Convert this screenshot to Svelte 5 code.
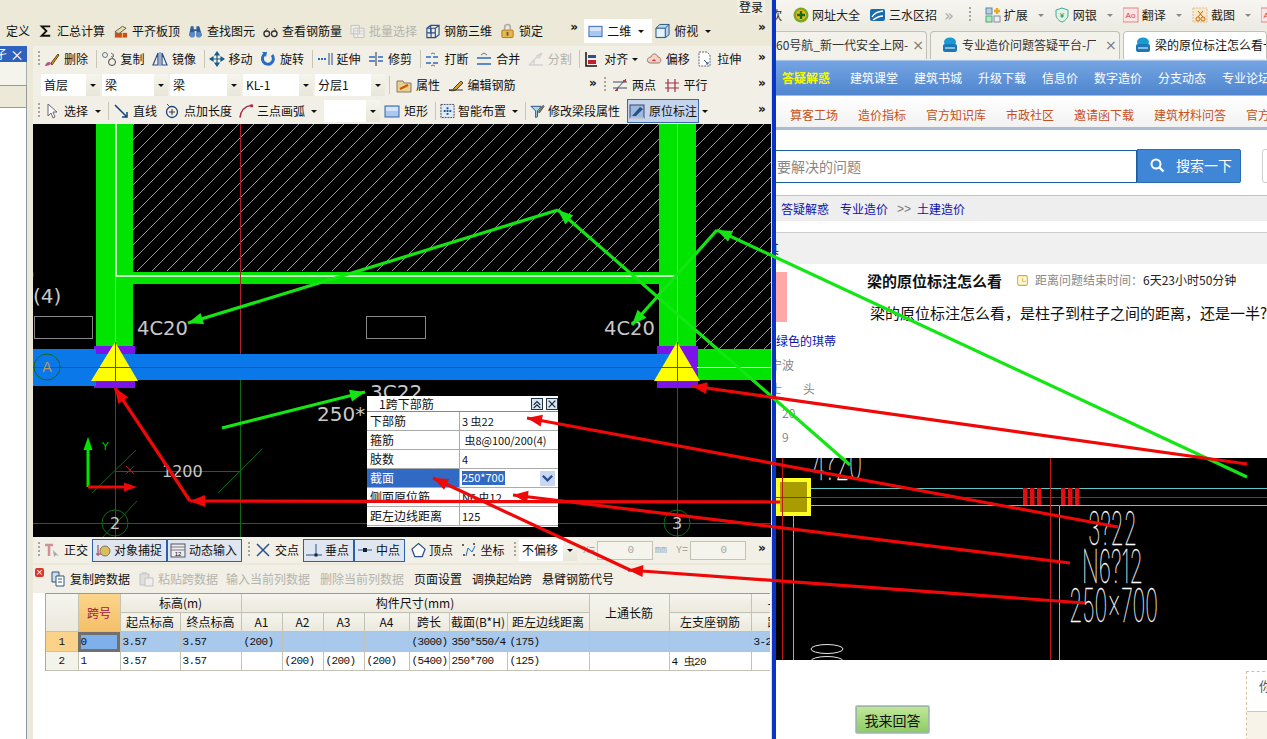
<script>
  const ic = {
    sigma: '<path d="M13 3H4l5 5-5 5h9" fill="none" stroke="#111" stroke-width="2"/>',
    align: '<path d="M2 9l8-6 4 2-8 6z" fill="#e8dfa0" stroke="#556"/><rect x="2" y="10" width="13" height="5" fill="#c8501a"/><path d="M10 10v5" stroke="#fc6"/>',
    binoc: '<path d="M3 3h3v3h3V3h3l3 10H9V8H7v5H1z" fill="#2d5c96"/><circle cx="4.5" cy="12" r="3" fill="#5b8ac4"/><circle cx="11.5" cy="12" r="3" fill="#5b8ac4"/>',
    glass: '<path d="M1 10l4-5M15 10l-3-5" stroke="#555" fill="none"/><circle cx="4" cy="11" r="3" fill="none" stroke="#333" stroke-width="1.4"/><circle cx="12" cy="11" r="3" fill="none" stroke="#333" stroke-width="1.4"/>',
    batch: '<path d="M1 2h9v9H1zM4 5h11v10H4z" fill="#eee" stroke="#bbb"/><path d="M4 8h11M4 11h11M8 5v10" stroke="#ccc"/>',
    grid3: '<path d="M2 5l4-3h9v10l-4 3H2zM2 5h9v10M11 5l4-3M6 2v9M2 10h9M6.500 5v10" fill="none" stroke="#2a4c90" stroke-width="1.2"/>',
    lock: '<rect x="2" y="7" width="12" height="8" rx="1" fill="#e8b84a" stroke="#a87a20"/><path d="M5 7V4a3 3 0 016 0v3" fill="none" stroke="#aaa" stroke-width="1.6"/><rect x="7" y="9" width="2" height="4" fill="#754"/>',
    rect: '<rect x="1" y="3" width="14" height="11" fill="#a9c8f0" stroke="#3a66b0"/><rect x="2" y="4" width="12" height="4" fill="#d5e4f8"/>',
    cube: '<path d="M1 5l4-4h10v11l-4 3H1z" fill="#b8d4ee" stroke="#26527e"/><path d="M1 5h10v10M11 5l4-4" fill="none" stroke="#26527e"/><path d="M2 6h8v8H2z" fill="#e8f2fa"/>',
    del: '<path d="M7 12l7-9 1 1-7 10z" fill="#d8a030" stroke="#640"/><path d="M1 15c1-4 4-5 6-3 0 2-3 3-6 3z" fill="#c05090"/>',
    copy: '<circle cx="4" cy="4" r="2.500" fill="none" stroke="#678"/><circle cx="11" cy="11" r="3.500" fill="none" stroke="#444"/><path d="M10 2l3 2-3 2M7 11l6-6" fill="none" stroke="#777"/>',
    mirror: '<path d="M1 14L6 2v12zM15 14L10 2v12z" fill="none" stroke="#2a4c90" stroke-width="1.2"/><path d="M8 1v14" stroke="#2a4c90" stroke-width=".8"/>',
    move: '<path d="M8 1v14M1 8h14M8 1L6 4h4zM8 15l-2-3h4zM1 8l3-2v4zM15 8l-3-2v4z" stroke="#1a5c8a" fill="#1a5c8a" stroke-width="1.2"/>',
    rot: '<path d="M12 4a5.500 5.500 0 11-7-1" fill="none" stroke="#2a6cc0" stroke-width="3"/><path d="M2 1l5 0-1 5z" fill="#2a6cc0"/>',
    extend: '<path d="M1 8h9" stroke="#2a6cc0" stroke-dasharray="2 1" stroke-width="2"/><path d="M12 2v12M15 2v12" stroke="#2a4c90"/>',
    trim: '<path d="M8 1v14" stroke="#333"/><path d="M1 6h6M1 10h6M10 6h5M10 10h5" stroke="#2a6cc0" stroke-width="1.300"/>',
    brk: '<path d="M1 6h14M1 12h14" stroke="#2a6cc0" stroke-dasharray="5 2" stroke-width="1.500"/><path d="M6 3l2-1 2 1M6 15l2-1 2 1" stroke="#678" fill="none"/>',
    merge: '<path d="M1 7h14M1 13h14" stroke="#2a6cc0" stroke-width="1.500"/><path d="M5 4l3-2 3 2" stroke="#678" fill="none"/>',
    split: '<path d="M1 14h14M1 14L12 3M6 14V9M14 2l-3 5-2-2z" stroke="#ccc" fill="none" stroke-width="1.300"/>',
    ali: '<path d="M2 1v14h11" stroke="#111" stroke-width="1.500" fill="none"/><rect x="4" y="4" width="8" height="3" fill="#2a5090"/><rect x="4" y="9" width="8" height="4" fill="#c02030"/>',
    off: '<path d="M2 11c-2-4 2-5 3-5 1-4 6-4 7 0 3 0 4 5 1 6H4z" fill="#f6d0c0" stroke="#977"/><path d="M6 10c1-2 3-2 4 0z" fill="#c33"/>',
    stretch: '<path d="M2 1h8l3 3v11H2z" fill="#fff" stroke="#667" stroke-dasharray="2 1"/><path d="M7 9l4 4M9 13h2v-2" stroke="#2a5090" fill="none"/>',
    prop: '<path d="M1 4h6l1 2h7v9H1z" fill="#e8d090" stroke="#876"/><path d="M4 12l8-4" stroke="#c50" stroke-width="2"/>',
    edit: '<path d="M1 13c3 1 4 0 5-2l7-7 2 2-7 7c-2 1-5 1-7 0z" fill="#d8a030" stroke="#443"/><path d="M1 13h14" stroke="#333"/>',
    two: '<path d="M3 14L14 2M1 5h14M1 11h14" stroke="#446" fill="none"/><path d="M4 13h2M11 4h3" stroke="#c33" stroke-width="2"/>',
    par: '<path d="M4 2v13M11 2v13M1 6h14M1 11h14" stroke="#a03048" stroke-width="1.200"/>',
    sel: '<path d="M4 1v12l3-3 2 5 2-1-2-5h4z" fill="#fff" stroke="#667"/>',
    line: '<path d="M2 2l12 12M14 9v5H9" stroke="#15447c" stroke-width="1.500" fill="none"/>',
    ptl: '<circle cx="8" cy="9" r="5.500" fill="none" stroke="#15447c" stroke-width="1.300"/><path d="M8 6v6M5 9h6" stroke="#333"/><path d="M3 1l3 3-3 2" fill="none" stroke="#a03048"/>',
    arc: '<path d="M1 15C2 8 6 3 13 2" fill="none" stroke="#a03048" stroke-width="1.600"/><rect x="12" y="1" width="3" height="3" fill="#a03048"/>',
    smart: '<rect x="1" y="1" width="14" height="14" fill="#dcebf6" stroke="#445" stroke-dasharray="2 1"/><path d="M8 4v8M4 8h8" stroke="#2a5090" stroke-width="2" stroke-dasharray="2 1"/>',
    mod: '<path d="M1 3h11L8 8v6l-2 1V8z" fill="#a8d8e8" stroke="#26527e"/><path d="M9 9l5-7 1 1-5 7z" fill="#9a8" stroke="#443"/>',
    orig: '<rect x="1" y="2" width="14" height="13" fill="#9cb8e0" stroke="#446"/><path d="M3 13l8-9 3 2-7 7z" fill="#26527e"/><path d="M1 15h14" stroke="#fff"/>',
    ortho: '<path d="M1 3h8M5 3v11" stroke="#d09098" stroke-width="2.500"/><path d="M9 8l1 7 2-2 3 1z" fill="#aaa"/>',
    osnap: '<path d="M3 3v11M1 12h6" stroke="#a03048"/><circle cx="10" cy="9" r="5" fill="#d8c060" stroke="#875"/>',
    dyn: '<rect x="1" y="2" width="14" height="13" fill="#eee" stroke="#556"/><path d="M1 5h14M1 8h14" stroke="#778"/><text x="8" y="14" font-size="6" text-anchor="middle" font-family="Liberation Sans">12</text>',
    cross: '<path d="M2 2l12 12M14 2L2 14" stroke="#2a5090" stroke-width="1.500"/>',
    perp: '<path d="M0 13h16M10 2v11" stroke="#2a5090"/><rect x="8.500" y="11.500" width="3" height="3" fill="#123"/>',
    mid: '<path d="M1 8h14" stroke="#2a5090"/><rect x="6" y="6" width="4" height="4" fill="#123"/>',
    vert: '<path d="M8 1l7 6-3 8H4L1 7z" fill="#fff" stroke="#2a5090" stroke-width="1.300"/>',
    coord: '<path d="M5 14l2-8 4 4 3-6" fill="none" stroke="#2a6cc0"/><circle cx="2" cy="3" r="1" fill="#333"/><circle cx="13" cy="2" r="1" fill="#333"/><circle cx="3" cy="13" r="1" fill="#333"/><circle cx="13" cy="13" r="1" fill="#333"/>',
    cp: '<path d="M2 1h7v10H2z" fill="#cde" stroke="#357"/><path d="M6 5h8v10H6z" fill="#fff" stroke="#357"/><path d="M8 8h4M8 11h4" stroke="#357"/>',
    paste: '<path d="M2 3h9v11H2z" fill="#ddd" stroke="#bbb"/><path d="M7 7h8v8H7z" fill="#eee" stroke="#bbb"/><rect x="4" y="1" width="5" height="3" fill="#ccc"/>',
    nav: '<circle cx="8" cy="8" r="7.500" fill="#7aa820"/><circle cx="8" cy="8" r="5" fill="#f4b820"/><path d="M8 4v8M4 8h8" stroke="#1a6a10" stroke-width="2.400"/>',
    water: '<rect x="0" y="2" width="15" height="12" rx="2" fill="#1a6ab0"/><path d="M2 10c3-5 6-5 11-6M3 13c4-3 7-4 10-4" stroke="#fff" stroke-width="1.400" fill="none"/>',
    ext: '<rect x="1" y="1" width="6" height="6" fill="#bcd" stroke="#58a"/><rect x="1" y="9" width="6" height="6" fill="#bde4b8" stroke="#4a8"/><rect x="9" y="9" width="6" height="6" fill="#eee" stroke="#88a"/><path d="M12 1v6M9 4h6" stroke="#e8a820" stroke-width="2.500"/>',
    bank: '<path d="M8 1l6 2v5c0 3-3 6-6 7-3-1-6-4-6-7V3z" fill="#dff4e8" stroke="#4a9"/><text x="8" y="11" font-size="8" text-anchor="middle" fill="#2a8a50" font-family="Liberation Sans">¥</text>',
    trans: '<rect x="0" y="1" width="15" height="14" fill="#fde4e4" stroke="#d88"/><text x="7.500" y="11" font-size="8" text-anchor="middle" fill="#c44" font-family="Liberation Sans">Ao</text>',
    shot: '<rect x="1" y="1" width="14" height="14" fill="#fbe8c8" stroke="#db8" stroke-dasharray="2 1"/><circle cx="6" cy="12" r="2" fill="none" stroke="#c60"/><circle cx="11" cy="12" r="2" fill="none" stroke="#c60"/><path d="M6 10l5-6M11 10L6 4" stroke="#c60"/>',
    ie: '<ellipse cx="8" cy="5" rx="6" ry="4.500" fill="#1a9ad0"/><rect x="1" y="7" width="14" height="8" rx="2" fill="#1878b8"/><path d="M3 11h10" stroke="#fff"/>',
    search: '<circle cx="7" cy="7" r="4.500" fill="none" stroke="#fff" stroke-width="2"/><path d="M10 10l4.500 4.500" stroke="#fff" stroke-width="2.400"/>',
    clock: '<rect x="2" y="2" width="12" height="12" rx="2" fill="#fff8dc" stroke="#e0a830" stroke-width="1.300"/><path d="M8 5v4h4" fill="none" stroke="#e0a830"/>',
    upup: '<path d="M2 7l4-4 4 4M2 11l4-4 4 4" fill="none" stroke="#123" stroke-width="1.400"/>',
    xx: '<path d="M2 2l8 8M10 2l-8 8" fill="none" stroke="#123" stroke-width="1.400"/>',
    down: '<path d="M3 5l5 5 5-5" fill="none" stroke="#2a4c90" stroke-width="2.400"/>'
  };

  const row1 = [
    { i: 'sigma', t: '汇总计算' }, { i: 'align', t: '平齐板顶' }, { i: 'binoc', t: '查找图元' },
    { i: 'glass', t: '查看钢筋量' }, { i: 'batch', t: '批量选择', off: true }, { i: 'grid3', t: '钢筋三维' }, { i: 'lock', t: '锁定' }
  ];
  const row2 = [
    { i: 'del', t: '删除' }, 's', { i: 'copy', t: '复制' }, { i: 'mirror', t: '镜像' }, 's', { i: 'move', t: '移动' }, { i: 'rot', t: '旋转' }, 's',
    { i: 'extend', t: '延伸' }, { i: 'trim', t: '修剪' }, 's', { i: 'brk', t: '打断' }, { i: 'merge', t: '合并' }, { i: 'split', t: '分割', off: true }, 's',
    { i: 'ali', t: '对齐', dd: true }, { i: 'off', t: '偏移' }, { i: 'stretch', t: '拉伸' }
  ];
  const row4a = [
    { i: 'sel', t: '选择', dd: true }, 's', { i: 'line', t: '直线' }, { i: 'ptl', t: '点加长度' }, { i: 'arc', t: '三点画弧', dd: true, n: true }
  ];
  const row4b = [
    { i: 'rect', t: '矩形' }, 's', { i: 'smart', t: '智能布置', dd: true, n: true }, 's', { i: 'mod', t: '修改梁段属性', n: true }
  ];
  const grid1 = [{ i: 'cp', t: '复制跨数据' }, { i: 'paste', t: '粘贴跨数据', off: true }];
  const combos = [['首层', 59], ['梁', 66], ['梁', 71], ['KL-1', 70], ['分层1', 70]];

  const arrows = [
    [1247, 477, 717, 230, 'g'], [717, 230, 632, 325, 'g'], [850, 465, 558, 210, 'g'], [558, 210, 188, 323, 'g'], [222, 428, 365, 392, 'g'],
    [1247, 464, 692, 386, 'r'], [1118, 527, 527, 418, 'r'], [1070, 563, 513, 495, 'r'], [1085, 603, 628, 570, 'r'],
    [780, 502, 190, 501, 'r'], [190, 501, 115, 388, 'r'], [630, 570, 433, 478, 'r']
  ].map(([x1, y1, x2, y2, c]) => {
    const d = Math.hypot(x2 - x1, y2 - y1), ux = (x2 - x1) / d, uy = (y2 - y1) / d;
    const bx = x2 - ux * 15, by = y2 - uy * 15;
    return { x1, y1, x2, y2, c: c === 'g' ? '#14e614' : '#ee0808',
      head: `${x2},${y2} ${bx - uy * 6},${by + ux * 6} ${bx + uy * 6},${by - ux * 6}` };
  });

  const dlg = [['下部筋', '3 虫22'], ['箍筋', ' 虫8@100/200(4)'], ['肢数', '4'], ['截面', '250*700', true], ['侧面原位筋', 'N6 虫12'], ['距左边线距离', '125']];
  const cols = [32, 42, 60, 61, 41, 41, 41, 45, 40, 58, 82, 80, 82, 20];
  const nav = ['建筑课堂', '建筑书城', '升级下载', '信息价', '数字造价', '分支动态', '专业论坛'];
  const sub = ['算客工场', '造价指标', '官方知识库', '市政社区', '邀请函下载', '建筑材料问答', '官方'];
  const bars = [1023, 1030, 1037, 1061, 1068, 1075];
</script>

{#snippet icon(name, cls = '')}
  <svg class="ic {cls}" viewBox="0 0 16 16" aria-hidden="true">{@html ic[name]}</svg>
{/snippet}
{#snippet dd()}<span class="dd"></span>{/snippet}
{#snippet tools(list)}
  {#each list as it}
    {#if it === 's'}
      <span class="sep"></span>
    {:else}
      <span class="tool" class:off={it.off} class:narrow={it.n}>
        {@render icon(it.i)}<span>{it.t}</span>{#if it.dd}{@render dd()}{/if}
      </span>
    {/if}
  {/each}
{/snippet}

<div class="screen">
  <section class="app">
    <div class="title"><span>登录</span></div>
    <div class="bar row1">
      <span class="def">定义</span>
      {@render tools(row1)}
      <span class="chev c1">»</span>
      <div class="view">
        <span class="tool white">{@render icon('rect')}<span>二维</span>{@render dd()}</span>
        <span class="tool">{@render icon('cube')}<span>俯视</span>{@render dd()}</span>
      </div>
      <span class="chev">»</span>
    </div>

    <div class="body">
      <aside class="panel">
        <div class="ptitle"><span>孑</span><b>×</b></div>
        <div class="pa"></div>
        <div class="pb"></div>
      </aside>

      <div class="work">
        <div class="bar">
          <i class="grip"></i>
          {@render tools(row2)}
          <span class="chev">»</span>
        </div>
        <div class="bar row3">
          {#each combos as [t, w]}
            <span class="combo" style="width:{w}px"><span>{t}</span><u></u></span>
          {/each}
          <span class="sep s3"></span>
          <span class="tool">{@render icon('prop')}<span>属性</span></span>
          <span class="tool">{@render icon('edit')}<span>编辑钢筋</span></span>
          <span class="chev c2">»</span>
          <i class="grip g2"></i>
          <span class="tool">{@render icon('two')}<span>两点</span></span>
          <span class="tool">{@render icon('par')}<span>平行</span></span>
          <span class="chev">»</span>
        </div>
        <div class="bar tight">
          <i class="grip"></i>
          {@render tools(row4a)}
          <span class="combo blank"><span></span><u></u></span>
          {@render tools(row4b)}
          <span class="tool active">{@render icon('orig')}<span>原位标注</span></span>
          {@render dd()}
          <span class="chev">»</span>
        </div>

        <div class="canvas">
          <svg class="cad" viewBox="33 124 738 413" aria-hidden="true">
            <defs>
              <pattern id="hatch" width="15" height="15" patternUnits="userSpaceOnUse" x="3">
                <path d="M0 15L15 0" stroke="#d8d8d8" stroke-width=".7"/>
              </pattern>
            </defs>
            <rect x="33" y="124" width="738" height="413" fill="#000"/>
            <rect x="133" y="124" width="526" height="147" fill="url(#hatch)"/>
            <rect x="696" y="124" width="75" height="225" fill="url(#hatch)"/>
            <path d="M96 124h37v148h526V124h37v226H659V284H133v62H96z" fill="#00e400"/>
            <rect x="94" y="346" width="41" height="42" fill="#7a14e8"/>
            <rect x="657" y="346" width="41" height="42" fill="#7a14e8"/>
            <rect x="33" y="349" width="63" height="37" fill="#0a78e8"/>
            <rect x="96" y="354" width="581" height="26" fill="#0a78e8"/>
            <rect x="698" y="349" width="73" height="31" fill="#00e400"/>
            <path d="M115 342l23 39H91zM677 342l23 39h-46z" fill="#ffff00"/>
            <path d="M116 124v152h561" fill="none" stroke="#fff" stroke-width="1.500"/>
            <path d="M115.500 276V342M677.500 124V342" stroke="#c8b070"/>
            <path d="M240.500 124V354M33 367.500H697" stroke="#b02030"/>
            <path d="M697 367.500H771" stroke="#fff"/>
            <path d="M115.500 342V381M677.500 342V381" stroke="#b02030"/>
            <path d="M115.500 388V537M240.500 380V537M677.500 381V537M33 523.500H771" stroke="#0c6a18"/>
            <path d="M115 471.500H240M92 493l44-43M218 493l44-44M100 540l37-39" stroke="#0c6a18"/>
            <rect x="34.500" y="316.500" width="58" height="22" fill="none" stroke="#888"/>
            <rect x="366.500" y="316.500" width="59" height="22" fill="none" stroke="#888"/>
            <g fill="none" stroke="#0c6a18"><circle cx="47" cy="367" r="13"/><circle cx="115" cy="523" r="13"/><circle cx="677" cy="523" r="13"/></g>
            <g font-family="DejaVu Sans" fill="#c8c8c8">
              <text x="33" y="303" font-size="20">(4)</text>
              <text x="27" y="281" font-size="20">)</text>
              <text x="137" y="335" font-size="19.500">4C20</text>
              <text x="604" y="335" font-size="19.500">4C20</text>
              <text x="162" y="477" font-size="16">1200</text>
              <text x="317" y="421" font-size="20">250*</text>
              <text x="370" y="399" font-size="20">3C22</text>
              <text x="115" y="529" font-size="16" text-anchor="middle">2</text>
              <text x="677" y="529" font-size="16" text-anchor="middle">3</text>
              <text x="47" y="372" font-size="14" text-anchor="middle" fill="#b89a60">A</text>
              <text x="102" y="450" font-size="11" fill="#00c000">Y</text>
            </g>
            <path d="M88 487V445" stroke="#00e400" stroke-width="3"/><path d="M88 437l-4.500 13h9z" fill="#00e400"/>
            <path d="M88 487h40" stroke="#ee0808" stroke-width="3"/><path d="M137 487l-13-4.500v9z" fill="#ee0808"/>
            <path d="M126 466l8 8M134 466l-8 8" stroke="#a81818"/>
          </svg>

          <div class="dialog">
            <div class="dhead"><span>1跨下部筋</span><svg viewBox="0 0 12 12" aria-hidden="true">{@html ic.upup}</svg><svg viewBox="0 0 12 12" aria-hidden="true">{@html ic.xx}</svg></div>
            {#each dlg as [k, v, on]}
              <div class="drow" class:on>
                <span class="dk">{k}</span>
                <span class="dv"><span>{v}</span>{#if on}<b><svg viewBox="0 0 16 16" aria-hidden="true">{@html ic.down}</svg></b>{/if}</span>
              </div>
            {/each}
          </div>
        </div>

        <div class="bar snap">
          <i class="grip"></i>
          <span class="tool">{@render icon('ortho')}<span>正交</span></span>
          <span class="tool toggled">{@render icon('osnap')}<span>对象捕捉</span></span>
          <span class="tool toggled">{@render icon('dyn')}<span>动态输入</span></span>
          <i class="grip g3"></i>
          <span class="tool">{@render icon('cross')}<span>交点</span></span>
          <span class="tool toggled tg">{@render icon('perp')}<span>垂点</span></span>
          <span class="tool toggled tg">{@render icon('mid')}<span>中点</span></span>
          <span class="tool narrow">{@render icon('vert')}<span>顶点</span></span>
          <span class="tool">{@render icon('coord')}<span>坐标</span></span>
          <i class="grip g4"></i>
          <span class="combo off2"><span>不偏移</span><u></u></span>
          <span class="lab">X=</span><span class="spin">0</span><span class="lab">mm</span>
          <span class="lab ly">Y=</span><span class="spin">0</span>
          <span class="chev">»</span>
        </div>

        <div class="lower">
          <div class="gbar">
            <i class="close">×</i>
            {@render tools(grid1)}
            <span class="act off">输入当前列数据</span>
            <span class="act off">删除当前列数据</span>
            <span class="act">页面设置</span>
            <span class="act">调换起始跨</span>
            <span class="act">悬臂钢筋代号</span>
          </div>
          <div class="gwrap">
            <table>
              <colgroup>{#each cols as w}<col style="width:{w}px" />{/each}</colgroup>
              <thead>
                <tr>
                  <th rowspan="2"></th><th rowspan="2" class="kua">跨号</th><th colspan="2">标高(m)</th>
                  <th colspan="7">构件尺寸(mm)</th><th rowspan="2">上通长筋</th><th></th><th class="endc">-</th>
                </tr>
                <tr>
                  <th>起点标高</th><th>终点标高</th><th>A1</th><th>A2</th><th>A3</th><th>A4</th>
                  <th>跨长</th><th>截面(B*H)</th><th>距左边线距离</th><th>左支座钢筋</th><th class="endc">跨</th>
                </tr>
              </thead>
              <tbody>
                <tr class="cur">
                  <th class="num">1</th><td class="cell0">0</td><td>3.57</td><td>3.57</td><td>(200)</td><td></td><td></td><td></td>
                  <td>(3000)</td><td>350*550/4</td><td>(175)</td><td></td><td></td><td>3-2</td>
                </tr>
                <tr>
                  <th class="num">2</th><td>1</td><td>3.57</td><td>3.57</td><td></td><td>(200)</td><td>(200)</td><td>(200)</td>
                  <td>(5400)</td><td>250*700</td><td>(125)</td><td></td><td>4 虫20</td><td></td>
                </tr>
              </tbody>
            </table>
          </div>
        </div>
      </div>
    </div>
  </section>

  <div class="split"></div>

  <section class="web">
    <div class="fav">
      <span class="cut">欢</span>
      <span class="f">{@render icon('nav')}网址大全</span>
      <span class="f">{@render icon('water')}三水区招</span>
      <span class="more">»</span><i class="grip fg"></i>
      <span class="f">{@render icon('ext')}扩展<em></em></span>
      <span class="f">{@render icon('bank')}网银<em></em></span>
      <span class="f">{@render icon('trans')}翻译<em></em></span>
      <span class="f">{@render icon('shot')}截图<em></em></span>
      {@render icon('trans')}
    </div>
    <div class="tabs">
      <span class="tab t1"><span>60号航_新一代安全上网-</span><i>×</i></span>
      <span class="tab t2">{@render icon('ie')}<span class="tt">专业造价问题答疑平台-厂</span><i>×</i></span>
      <span class="tab t3">{@render icon('ie')}<span>梁的原位标注怎么看一</span></span>
    </div>
    <nav class="main"><b>答疑解惑</b>{#each nav as n}<a>{n}</a>{/each}</nav>
    <nav class="subn">{#each sub as n}<a>{n}</a>{/each}</nav>
    <div class="search">
      <div class="inp">要解决的问题</div>
      <div class="btn">{@render icon('search')}<span>搜索一下</span></div>
      <div class="ghost"></div>
    </div>
    <div class="crumb"><a>答疑解惑</a><a>专业造价</a><span>&gt;&gt;</span><a>土建造价</a></div>
    <div class="sect"><span>其</span></div>
    <div class="q">
      <div class="side">
        <div class="pink"></div>
        <a>绿色的琪蒂</a>
        <p class="nb">宁波</p>
        <p class="wide"><span>士</span><span>头</span></p>
        <p class="ind">20</p>
        <p class="ind">9</p>
      </div>
      <div class="qm">
        <div class="qt"><h1>梁的原位标注怎么看</h1>{@render icon('clock')}<span class="g">距离问题结束时间：</span><span>6天23小时50分钟</span></div>
        <p>梁的原位标注怎么看，是柱子到柱子之间的距离，还是一半?</p>
      </div>
    </div>
    <svg class="photo" viewBox="776 458 491 202" aria-hidden="true">
      <rect x="776" y="458" width="491" height="202" fill="#000"/>
      <rect x="778" y="480" width="31" height="34" fill="#a89c00" stroke="#ffff20" stroke-width="4"/>
      <path d="M811 488.500H1267M811 505.500H1059M1059.500 660V505.500H1267M793.500 516V660" fill="none" stroke="#5fc8c8"/>
      <path d="M782.500 458V660M1050.500 458V660M776 497.500H1267" stroke="#c01818"/>
      {#each bars as x}<rect {x} y="488" width="4.500" height="17" fill="#e01010"/>{/each}
      <g font-family="Inter" fill="#fff" stroke="#fff" stroke-width=".35" font-weight="100">
        <text x="812" y="480" font-size="46" textLength="50" lengthAdjust="spacingAndGlyphs">4?20</text>
        <text x="1088" y="545" font-size="46" textLength="49" lengthAdjust="spacingAndGlyphs">3?22</text>
        <text x="1082" y="583" font-size="46" textLength="61" lengthAdjust="spacingAndGlyphs">N6?12</text>
        <text x="1069" y="622" font-size="46" textLength="89" lengthAdjust="spacingAndGlyphs">250x700</text>
      </g>
      <g fill="none" stroke="#fff" stroke-width=".9">
        <ellipse cx="827" cy="649" rx="16" ry="4.500"/><ellipse cx="827" cy="661" rx="16" ry="4.500"/>
      </g>
    </svg>
    <div class="foot">
      <button>我来回答</button>
      <div class="card"><div><span>你</span></div><div class="cb"></div></div>
    </div>
  </section>

  <svg class="over" viewBox="0 0 1267 739" aria-hidden="true">
    {#each arrows as a}
      <line x1={a.x1} y1={a.y1} x2={a.x2} y2={a.y2} stroke={a.c} stroke-width="3.200" />
      <polygon points={a.head} fill={a.c} />
    {/each}
  </svg>
</div>

<style>
  :global(body) { margin: 0; background: #ece9d8; }
  .screen { position: relative; width: 1267px; height: 739px; overflow: hidden; display: flex; font: 12px/1 "Noto Sans CJK SC", sans-serif; color: #111; }
  .ic { width: 16px; height: 16px; flex: none; display: block; }
  i { font-style: normal; }

  /* CAD application */
  .app { width: 771px; flex: none; display: flex; flex-direction: column; background: #ece9d8; }
  .title { height: 16px; display: flex; justify-content: flex-end; padding-right: 6px; background: #ece9d8; }
  .title span { background: #f1efe3; padding: 1px 2px 0 2px; height: 15px; box-sizing: border-box; }
  .bar { display: flex; align-items: center; height: 26px; background: #f1efe6; flex: none; white-space: nowrap; }
  .row1 { height: 30px; background: #ece9d8; padding-left: 6px; }
  .def { margin-right: 8px; }
  .tool { display: flex; align-items: center; gap: 4px; margin-right: 7.5px; }
  .tool.narrow { gap: 3px; }
  .tool.narrow .ic { width: 15px; }
  .row1 .tool { margin-right: 8px; }
  .row1 .tool .ic { width: 15px; }
  .tight .tool { margin-right: 7px; }
  .off { color: #b4b4ac; }
  .off :global(svg) { opacity: .85; }
  .sep { width: 1px; height: 18px; background: #c8c6b8; margin-right: 4px; flex: none; }
  .dd { width: 0; height: 0; margin: 0 0 0 6px; border: 3px solid transparent; border-top: 3px solid #111; border-bottom: 0; flex: none; }
  .tool .dd { margin-left: 0; margin-right: 0; }
  .tight .tool .dd { margin-left: 3px; }
  .chev { margin-left: auto; margin-right: 5px; font: bold 12px "DejaVu Sans", sans-serif; align-self: flex-start; padding-top: 4px; width: 8px; }
  .c1 { margin-left: 19px; margin-right: 6px; }
  .c2 { margin-left: 66px; margin-right: 7px; }
  .view { flex: none; display: flex; align-items: center; margin-right: auto; height: 100%; }
  .row1 .white { background: #fff; height: 24px; padding: 0 8px 0 4px; margin-right: 3px; }
  .view .tool .dd { margin-left: 3px; }
  .body { flex: 1; min-height: 0; display: flex; }
  .panel { width: 33px; flex: none; box-sizing: border-box; border-right: 6px solid #ece9d8; background: #fff; display: flex; flex-direction: column; box-shadow: inset -1px 0 #8c9aa8; }
  .ptitle { height: 16px; background: #2f62bc; color: #fff; display: flex; justify-content: space-between; align-items: center; overflow: hidden; padding-right: 3px; }
  .ptitle span { margin-left: -5px; }
  .ptitle b { font-weight: 400; font-size: 14px; }
  .pa { height: 23px; background: #f4f3ec; border-right: 1px solid #aaa; }
  .pb { height: 21px; background: #ece9d8; border: 1px solid #999; border-left: 0; }
  .work { width: 738px; flex: none; display: flex; flex-direction: column; }
  .grip { width: 2px; height: 16px; margin: 0 4px; flex: none; background: repeating-linear-gradient(#a8a698 0 2px, transparent 2px 4px); }
  .bar > .grip:first-child { margin-left: 5px; }
  .row3 { padding-left: 8px; }
  .combo { height: 22px; background: #fff; display: flex; align-items: center; justify-content: space-between; padding-left: 3px; box-sizing: border-box; margin-right: 2px; flex: none; }
  .combo u { width: 14px; height: 22px; background: linear-gradient(#f6f5ee, #e8e6d8); position: relative; flex: none; }
  .combo u::after { content: ""; position: absolute; left: 4px; top: 10px; border: 3px solid transparent; border-top-color: #111; border-bottom: 0; }
  .blank { width: 56px; margin: 0 4px 0 0; }
  .s3 { margin-left: 2px; margin-right: 6px; }
  .g2 { margin-left: 0; margin-right: 6px; }
  .active.tool { background: #c4d4ec; box-shadow: inset 0 0 0 1px #4068a8; height: 24px; padding: 0 2px 0 2px; margin-right: 0; box-sizing: border-box; }
  .active + .dd { margin-left: 3px; margin-right: 0; }
  .canvas { position: relative; height: 413px; flex: none; background: #000; }
  .cad { position: absolute; inset: 0; width: 738px; height: 413px; display: block; }
  .dialog { position: absolute; left: 334px; top: 272px; width: 191px; background: #fff; border-bottom: 1px solid #fff; }
  .dhead { height: 15px; display: flex; align-items: center; padding-left: 12px; border-bottom: 1px solid #888; gap: 3px; }
  .dhead span { margin-right: auto; }
  .dhead svg { width: 12px; height: 12px; border: 1px solid #234; background: #d8e6f4; box-sizing: border-box; }
  .drow { height: 19px; display: grid; grid-template-columns: 93px 1fr; border-bottom: 1px solid #aaa; box-sizing: border-box; align-items: stretch; }
  .dk { display: flex; align-items: center; padding-left: 3px; border-right: 1px solid #aaa; }
  .dv { display: flex; align-items: center; padding-left: 2px; justify-content: space-between; white-space: pre; font-size: 11px; }
  .on .dk { background: #316ac5; color: #fff; }
  .on .dv > span { background: #316ac5; color: #fff; padding: 1px 0 2px; width: 43px; }
  .on .dv { padding-right: 3px; }
  .on .dv b { width: 15px; height: 15px; background: #c8d8f2; display: block; }
  .on .dv b svg { width: 15px; height: 15px; display: block; }
  .snap { height: 26px; background: #f1efe6; margin-bottom: 2px; }
  .toggled.tool { background: #dfe6f0; box-shadow: inset 0 0 0 1px #2a60a8; height: 23px; width: 75px; padding: 0 0 0 3px; margin-right: 0; box-sizing: border-box; gap: 3px; }
  .tool + .toggled.tool { margin-left: -3.5px; }
  .toggled.tool + .toggled.tool { margin-left: 0; }
  .toggled.tg { width: 51px; }
  .tg + .tool:not(.tg) { margin-left: 6px; }
  .g3 { margin-left: 6px; margin-right: 5px; }
  .g4 { margin-left: 2px; margin-right: 3px; }
  .off2 { width: 58px; margin-right: 6px; }
  .lab { color: #a8a8a0; font: 10px "Liberation Mono", monospace; margin-right: 2px; }
  .ly { margin-left: 7px; }
  .spin { width: 56px; height: 19px; border: 1px solid #c4c2b4; box-sizing: border-box; background: #f4f3ec; color: #a8a8a0; font: 11px/17px "Liberation Mono", monospace; text-align: right; padding-right: 18px; margin-right: 2px; flex: none; }
  .lower { flex: 1; min-height: 0; background: #fff; display: flex; flex-direction: column; }
  .gbar { height: 28px; background: #f1efe6; display: flex; align-items: center; padding-left: 17px; white-space: nowrap; position: relative; flex: none; }
  .gbar .tool { margin-right: 8px; }
  .act { margin-right: 10px; }
  .close { position: absolute; left: 2px; top: 3px; width: 9px; height: 9px; background: #d83828; color: #fff; font: 9px/9px "DejaVu Sans", sans-serif; text-align: center; border-radius: 2px; }
  .gwrap { margin-left: 12px; width: 725px; overflow: hidden; flex: none; border-top: 1px solid #8c9cb0; border-left: 1px solid #a8a8a8; box-sizing: border-box; position: relative; }
  table { border-collapse: collapse; table-layout: fixed; width: 725px; }
  th, td { padding: 0; height: 18px; border-right: 1px solid #c4c2b4; border-bottom: 1px solid #c4c2b4; font-weight: 400; overflow: hidden; white-space: nowrap; }
  thead th { background: linear-gradient(#f5f4ee, #ece9dc); text-align: center; }
  thead th.endc { text-align: left; padding-left: 16px; }
  th.kua { background: linear-gradient(#fbd58c, #f4bf68); color: #a0183c; }
  tbody th.num { background: #f4f3ea; text-align: center; font: 11px "Liberation Mono", monospace; }
  tbody td { font: 11px "Liberation Mono", monospace; letter-spacing: -.6px; padding-left: 2px; }
  .cur td { background: #a8c8ec; height: 19px; }
  .cur th.num { background: #fbd28a; }
  .cur td.cell0 { background: #7fb0ea; outline: 3px solid #707070; outline-offset: -3px; }

  /* Browser */
  .split { width: 5px; flex: none; background: #0a34c4; border-left: 1px solid #d8dce8; box-sizing: border-box; }
  .web { flex: 1; min-width: 0; background: #fff; overflow: hidden; display: flex; flex-direction: column; position: relative; z-index: 0; }
  .fav { height: 30px; flex: none; display: flex; align-items: center; background: linear-gradient(#f6f5f0, #ecebe2); white-space: nowrap; color: #222; }
  .cut { width: 6px; overflow: hidden; flex: none; margin-right: 11px; direction: rtl; }
  .f { display: flex; align-items: center; gap: 3px; margin-right: 10px; }
  .f em { width: 0; height: 0; border: 3.500px solid transparent; border-top-color: #888; border-bottom: 0; margin: 0 0 0 7px; }
  .more { font: 16px "DejaVu Sans", sans-serif; color: #aaa; margin: 0 15px 0 -3px; }
  .fg { margin: 0 14px 0 0; }
  .tabs { height: 30px; flex: none; display: flex; align-items: flex-start; gap: 3px; background: #efeee6; padding-top: 1px; white-space: nowrap; box-sizing: border-box; }
  .tab { height: 28px; display: flex; align-items: center; background: #f2f1ea; border: 1px solid #c0c0b8; border-bottom: 0; border-radius: 4px 4px 0 0; box-sizing: border-box; color: #333; overflow: hidden; gap: 4px; flex: none; padding-bottom: 2px; }
  .tab i { color: #777; font: 14px "DejaVu Sans", sans-serif; flex: none; }
  .t1 { width: 151px; border-left: 0; border-radius: 0 4px 0 0; }
  .t2 { width: 190px; padding-left: 11px; }
  .tt { width: 134px; overflow: hidden; margin-right: 5px; flex: none; }
  .t3 { flex: 1; background: #fff; padding-left: 11px; color: #111; }
  .main { height: 36px; flex: none; box-sizing: border-box; display: flex; align-items: center; gap: 16px; padding-left: 6px; background: linear-gradient(#74a4e2, #4f86cf); border-top: 1px solid #a8c4e8; border-bottom: 1px solid #9cc0e8; color: #fff; white-space: nowrap; }
  .main b { color: #f8f800; margin-right: 4px; }
  .subn { flex: none; display: flex; align-items: center; gap: 20px; padding: 6px 0 0 14px; background: linear-gradient(#fff, #f2f2f2); color: #c85020; white-space: nowrap; box-sizing: border-box; border-bottom: 3px solid #a8bcd4; height: 34px; }
  .search { display: flex; margin-top: 19px; height: 34px; flex: none; align-items: stretch; }
  .inp { width: 361px; flex: none; box-sizing: border-box; border: 1px solid #1a5c9e; border-left: 0; margin-top: 1px; font-size: 14px; color: #888; display: flex; align-items: center; padding: 0 0 2px 1px; }
  .btn { width: 104px; flex: none; background: #3f86d6; border: 1px solid #2a6cb0; box-sizing: border-box; display: flex; align-items: center; color: #fff; font-size: 14px; padding: 0 0 2px 11px; gap: 11px; border-radius: 0 2px 2px 0; }
  .ghost { margin-left: 21px; width: 10px; height: 32px; border: 1px solid #ccc; border-radius: 3px; flex: none; }
  .crumb { margin-top: 12px; height: 26px; flex: none; background: #eee; border-top: 1px solid #a8c8dc; box-sizing: border-box; display: flex; align-items: center; padding-left: 5px; gap: 11px; }
  .crumb a { color: #1010a8; }
  .crumb span { color: #777; font-family: "Liberation Sans", sans-serif; margin: 0 -5px 0 -2px; }
  .sect { margin-top: 11px; height: 32px; flex: none; background: #f0f0f0; border-top: 1px solid #ccc; display: flex; align-items: center; overflow: hidden; box-sizing: border-box; }
  .sect span { margin-left: -9px; }
  .q { display: flex; flex: none; height: 194px; }
  .side { width: 91px; flex: none; color: #888; }
  .pink { width: 11px; height: 50px; margin-top: 8px; background: #ffa8a8; margin-bottom: 13px; }
  .side a { color: #1010a8; display: block; height: 24px; white-space: nowrap; }
  .side p { margin: 0; height: 24px; }
  .side .nb { margin-left: -6px; }
  .side .wide { display: flex; gap: 21px; margin-left: -6px; }
  .side .ind { margin-left: 6px; }
  .qm { flex: 1; min-width: 0; white-space: nowrap; }
  .qt { display: flex; align-items: center; margin-top: 7px; height: 18px; color: #222; }
  .qt h1 { margin: 0 14px 0 0; font-size: 15px; font-weight: 700; color: #111; }
  .qt .ic { width: 13px; height: 13px; margin-right: 6px; }
  .g { color: #888; }
  .qm p { margin: 16px 0 0 3px; font-size: 15px; }
  .photo { width: 491px; height: 202px; flex: none; display: block; }
  .foot { position: relative; flex: 1; }
  button { position: absolute; left: 79px; top: 45px; width: 75px; height: 29px; font: 14px "Noto Sans CJK SC", sans-serif; color: #111; background: linear-gradient(#c2e89a, #8ccb64); border: 1px solid #b0c8d4; border-radius: 2px; box-shadow: inset 0 0 0 1px #9cb8a4; padding: 0; }
  .card { position: absolute; left: 470px; top: 11px; width: 30px; height: 70px; border: 1px dashed #cdbfa4; border-right: 0; box-sizing: border-box; }
  .card div:first-child { height: 40px; padding: 7px 0 0 12px; box-sizing: border-box; border-bottom: 1px solid #d4c8a8; font-size: 13px; color: #555; }
  .cb { height: 30px; background: #f7f3e8; }
  .over { position: absolute; inset: 0; width: 1267px; height: 739px; pointer-events: none; z-index: 5; }
</style>
